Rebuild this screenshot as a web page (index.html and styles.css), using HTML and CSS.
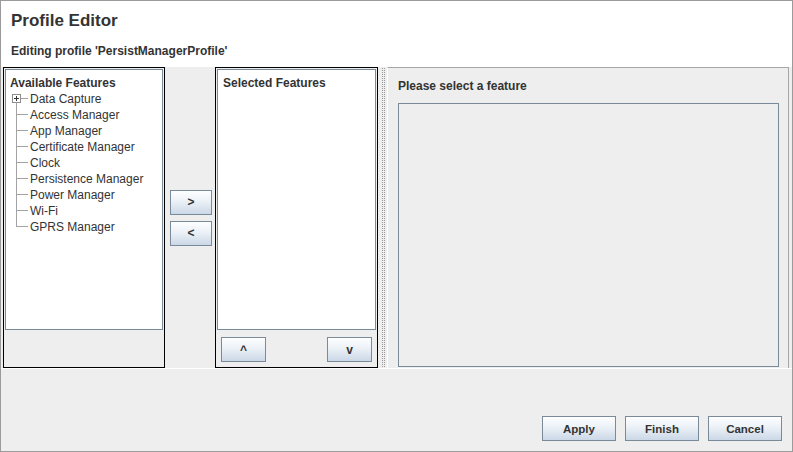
FILE: index.html
```html
<!DOCTYPE html>
<html>
<head>
<meta charset="utf-8">
<title>Profile Editor</title>
<link rel="stylesheet" href="styles.css">
</head>
<body>
<div class="window">
  <div class="header">
    <div class="title">Profile Editor</div>
    <div class="subtitle">Editing profile 'PersistManagerProfile'</div>
  </div>
  <div class="main">
    <div class="panel panel-avail">
      <div class="list list-avail">
        <div class="list-title">Available Features</div>
        <div class="node"><svg class="conn" width="20" height="16" viewBox="0 0 20 16"><path class="line" d="M6.5 12V16M11 7.5H18"/><rect class="box" x="2.5" y="3.5" width="8" height="8"/><path class="plus" d="M4 7.5h5M6.5 5v5"/></svg><span>Data Capture</span></div>
        <div class="node"><svg class="conn" width="20" height="16" viewBox="0 0 20 16"><path class="line" d="M6.5 0V16M7 7.5H18"/></svg><span>Access Manager</span></div>
        <div class="node"><svg class="conn" width="20" height="16" viewBox="0 0 20 16"><path class="line" d="M6.5 0V16M7 7.5H18"/></svg><span>App Manager</span></div>
        <div class="node"><svg class="conn" width="20" height="16" viewBox="0 0 20 16"><path class="line" d="M6.5 0V16M7 7.5H18"/></svg><span>Certificate Manager</span></div>
        <div class="node"><svg class="conn" width="20" height="16" viewBox="0 0 20 16"><path class="line" d="M6.5 0V16M7 7.5H18"/></svg><span>Clock</span></div>
        <div class="node"><svg class="conn" width="20" height="16" viewBox="0 0 20 16"><path class="line" d="M6.5 0V16M7 7.5H18"/></svg><span>Persistence Manager</span></div>
        <div class="node"><svg class="conn" width="20" height="16" viewBox="0 0 20 16"><path class="line" d="M6.5 0V16M7 7.5H18"/></svg><span>Power Manager</span></div>
        <div class="node"><svg class="conn" width="20" height="16" viewBox="0 0 20 16"><path class="line" d="M6.5 0V16M7 7.5H18"/></svg><span>Wi-Fi</span></div>
        <div class="node"><svg class="conn" width="20" height="16" viewBox="0 0 20 16"><path class="line" d="M6.5 0V8M7 7.5H18"/></svg><span>GPRS Manager</span></div>
      </div>
    </div>
    <div class="mover">
      <button class="btn btn-arrow">&gt;</button>
      <button class="btn btn-arrow">&lt;</button>
    </div>
    <div class="panel panel-sel">
      <div class="list list-sel">
        <div class="list-title">Selected Features</div>
      </div>
      <div class="order">
        <button class="btn btn-order">^</button>
        <button class="btn btn-order">v</button>
      </div>
    </div>
    <div class="divider"><div class="grip"></div></div>
    <div class="detail">
      <div class="detail-title">Please select a feature</div>
      <div class="detail-box"></div>
    </div>
  </div>
  <div class="footer">
    <button class="btn btn-foot">Apply</button>
    <button class="btn btn-foot">Finish</button>
    <button class="btn btn-foot">Cancel</button>
  </div>
</div>
</body>
</html>
```
FILE: styles.css
```css
html, body {
  margin: 0;
  padding: 0;
  background: #eeeeee;
}

.window {
  width: 793px;
  height: 452px;
  box-sizing: border-box;
  border: 1px solid #9b9b9b;
  background: #eeeeee;
  display: flex;
  flex-direction: column;
  font-family: "Liberation Sans", Arial, sans-serif;
  color: #333333;
}

.header {
  height: 66px;
  flex: none;
  box-sizing: border-box;
  background: #ffffff;
  padding: 10px 0 0 10px;
}

.title {
  font-size: 17px;
  font-weight: bold;
  line-height: 20px;
}

.subtitle {
  font-size: 12px;
  font-weight: bold;
  line-height: 16px;
  margin-top: 12px;
}

.main {
  height: 302px;
  flex: none;
  box-sizing: border-box;
  display: flex;
  padding: 0 3px 0 2px;
  border-bottom: 1px solid #ffffff;
}

.panel {
  box-sizing: border-box;
  border: 1px solid #000000;
  padding: 1px;
  display: flex;
  flex-direction: column;
  background: #eeeeee;
}

.panel-avail {
  width: 162px;
}

.panel-sel {
  width: 163px;
}

.list {
  height: 261px;
  flex: none;
  box-sizing: border-box;
  background: #ffffff;
  border: 1px solid #7a8a99;
  padding: 5px 0 0 4px;
}

.list-sel {
  padding-left: 5px;
}

.list-title {
  font-size: 12px;
  font-weight: bold;
  line-height: 16px;
}

.node {
  display: flex;
  align-items: center;
  height: 16px;
  font-size: 12px;
  line-height: 16px;
  white-space: nowrap;
}

.conn {
  display: block;
  flex: none;
  shape-rendering: crispEdges;
}

.conn .line {
  fill: none;
  stroke: #a3a3a3;
  stroke-width: 1;
}

.conn .box {
  fill: #ffffff;
  stroke: #8c8c8c;
  stroke-width: 1;
}

.conn .plus {
  fill: none;
  stroke: #333333;
  stroke-width: 1;
}

.mover {
  width: 50px;
  flex: none;
  box-sizing: border-box;
  display: flex;
  flex-direction: column;
  justify-content: center;
  align-items: flex-start;
  gap: 6px;
  padding-left: 5px;
}

.btn {
  height: 25px;
  box-sizing: border-box;
  border: 1px solid #7a8a99;
  border-radius: 0;
  background: linear-gradient(#fdfeff 0%, #eef3f8 40%, #cbd8e7 100%);
  font-family: "Liberation Sans", Arial, sans-serif;
  font-weight: bold;
  font-size: 12px;
  color: #333333;
  padding: 0;
  margin: 0;
}

.btn-arrow {
  width: 42px;
}

.order {
  display: flex;
  justify-content: space-between;
  padding: 0 4px;
  margin-top: 7px;
}

.btn-order {
  width: 45px;
}

.divider {
  width: 9px;
  flex: none;
  box-sizing: border-box;
  padding: 1px 0 1px 4px;
  display: flex;
}

.grip {
  width: 1px;
  border-left: 1px dotted #9a9a9a;
  border-right: 1px dotted #9a9a9a;
}

.detail {
  width: 402px;
  flex: none;
  box-sizing: border-box;
  border-top: 1px solid #a6a6a6;
  border-right: 1px solid #a6a6a6;
  border-left: 1px solid #ffffff;
  padding: 10px 9px 0 10px;
}

.detail-title {
  font-size: 12px;
  font-weight: bold;
  line-height: 16px;
}

.detail-box {
  margin-top: 9px;
  height: 264px;
  box-sizing: border-box;
  border: 1px solid #7a8a99;
  background: #eeeeee;
}

.footer {
  flex: 1;
  display: flex;
  justify-content: flex-end;
  align-items: flex-end;
  gap: 9px;
  padding: 0 10px 10px 0;
}

.btn-foot {
  width: 74px;
  font-size: 11.5px;
}
```
